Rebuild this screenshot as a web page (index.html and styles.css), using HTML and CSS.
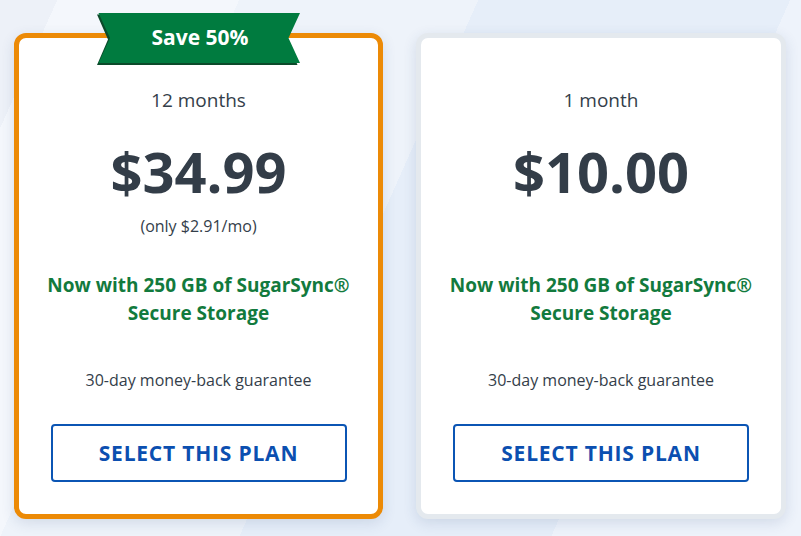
FILE: index.html
```html
<!DOCTYPE html>
<html lang="en">
<head>
<meta charset="utf-8">
<title>Plans</title>
<link rel="stylesheet" href="styles.css">
</head>
<body>
<div class="plans">
  <div class="card card-featured">
    <div class="ribbon">
      <svg class="ribbon-shape" viewBox="0 0 204 52" width="204" height="52">
        <polygon points="0,1.5 200.5,1.5 189.5,26.5 200.5,52 0,52 11,26.5" fill="#0b4a2a"/>
        <polygon points="1.5,0 203,0 191.5,25 203,50 1.5,50 13,25" fill="#007b3f"/>
      </svg>
      <span class="ribbon-text">Save 50%</span>
    </div>
    <p class="term">12 months</p>
    <p class="price">$34.99</p>
    <p class="per-month">(only $2.91/mo)</p>
    <p class="storage">Now with 250 GB of SugarSync®<br>Secure Storage</p>
    <p class="guarantee">30-day money-back guarantee</p>
    <a class="select-btn" href="#">SELECT THIS PLAN</a>
  </div>
  <div class="card card-plain">
    <p class="term">1 month</p>
    <p class="price">$10.00</p>
    <p class="per-month"></p>
    <p class="storage">Now with 250 GB of SugarSync®<br>Secure Storage</p>
    <p class="guarantee">30-day money-back guarantee</p>
    <a class="select-btn" href="#">SELECT THIS PLAN</a>
  </div>
</div>
</body>
</html>
```

FILE: styles.css
```css
html, body {
  margin: 0;
  padding: 0;
}

body {
  width: 801px;
  height: 536px;
  overflow: hidden;
  font-family: "Open Sans", "Liberation Sans", sans-serif;
  color: #343e4a;
  background: linear-gradient(114deg,
    #edf1f8 0%, #edf1f8 5.5%,
    #f4f7fc 5.5%, #f4f7fc 23%,
    #eef3fa 23%, #eef3fa 46%,
    #e6eef9 46%, #e6eef9 76%,
    #eef3fb 76%, #eef3fb 100%);
}

.plans {
  display: flex;
  gap: 33px;
  padding: 33px 0 0 14px;
}

.card {
  position: relative;
  box-sizing: border-box;
  display: flex;
  flex-direction: column;
  align-items: center;
  text-align: center;
  background: #ffffff;
  border: 5px solid #e4e9ee;
  border-radius: 12px;
  padding: 0 0 32px;
  box-shadow: 0 4px 14px rgba(40, 70, 120, 0.14);
}

.card-featured {
  width: 369px;
  border-color: #ec8a06;
}

.card-plain {
  width: 370px;
}

.card p {
  margin: 0;
}

.ribbon {
  position: absolute;
  left: 78px;
  top: -25px;
  width: 204px;
  height: 52px;
}

.ribbon-shape {
  position: absolute;
  left: 0;
  top: 0;
  display: block;
}

.ribbon-text {
  position: relative;
  display: block;
  font-size: 21px;
  font-weight: 700;
  line-height: 49px;
  color: #ffffff;
  text-align: center;
  padding-left: 2px;
}

.term {
  margin-top: 50px !important;
  font-size: 19px;
  line-height: 24px;
}

.price {
  margin-top: 27px !important;
  font-size: 56px;
  font-weight: 700;
  line-height: 64px;
  color: #333d48;
}

.per-month {
  margin-top: 12px !important;
  height: 22px;
  font-size: 16px;
  line-height: 22px;
}

.storage {
  margin-top: 34px !important;
  font-size: 19px;
  font-weight: 700;
  line-height: 28px;
  color: #127a3d;
}

.guarantee {
  margin-top: 41.5px !important;
  font-size: 16px;
  line-height: 22px;
}

.select-btn {
  box-sizing: border-box;
  display: flex;
  align-items: center;
  justify-content: center;
  margin-top: 33.5px;
  width: 296px;
  height: 58px;
  border: 2px solid #0b55b4;
  border-radius: 4px;
  font-size: 21px;
  font-weight: 700;
  letter-spacing: 0.8px;
  color: #0b4fb0;
  text-decoration: none;
}
```
